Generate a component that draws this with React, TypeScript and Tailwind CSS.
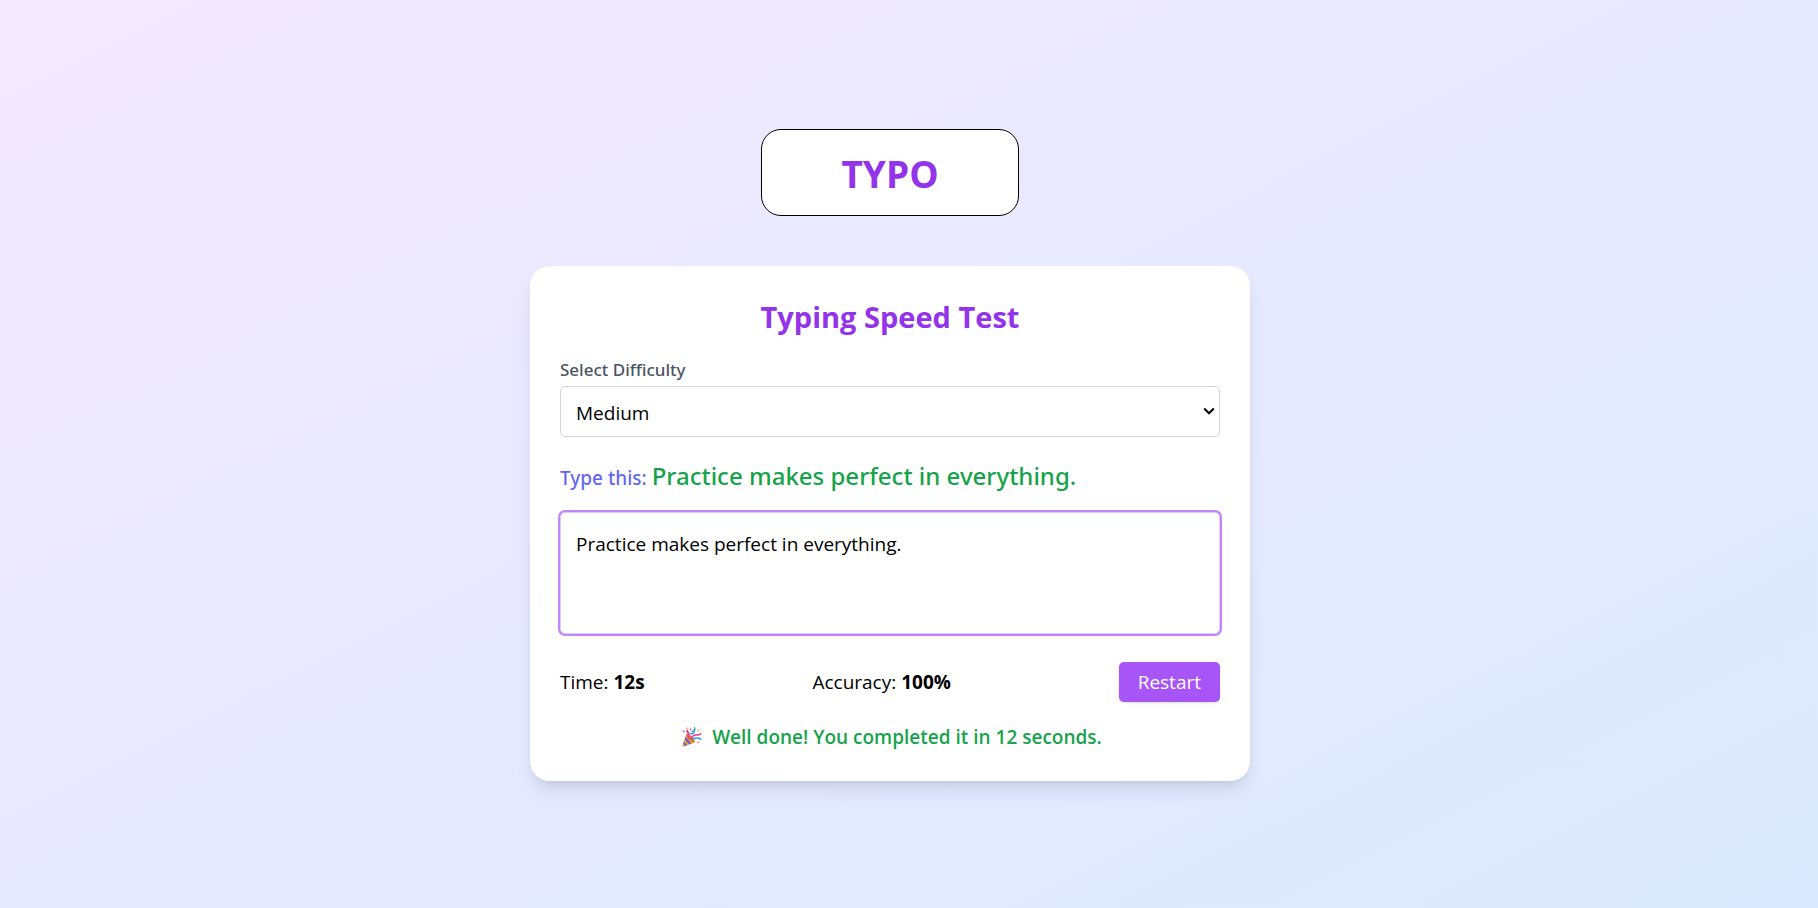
import { useState } from "react";

const PROMPTS: Record<string, string> = {
  Easy: "The sun is bright today.",
  Medium: "Practice makes perfect in everything.",
  Hard: "Consistency and discipline turn difficult skills into habits.",
};

function PartyPopper() {
  return (
    <svg viewBox="0 0 20 20" className="size-5" aria-hidden="true">
      <path d="M4.4 7.2 12.6 15.4 1.6 19.6Q.3 19.9.5 18.6Z" fill="#f2a03d" />
      <path d="M3.4 9.8 9.3 16.6 7.2 17.4 2.6 12.4Z" fill="#6a63c8" />
      <path d="M1.9 14.4 5.2 18.2 3.3 18.9 1.2 16.8Z" fill="#6a63c8" />
      <ellipse cx="8.5" cy="11.2" rx="2" ry="5.7" transform="rotate(-45 8.5 11.2)" fill="#d67d2e" />
      <path d="M5 3.6Q7.4 6.6 6.4 11" fill="none" stroke="#f92f92" strokeWidth="1.7" strokeLinecap="round" />
      <path d="M8.2 6.4Q11.5 7.8 12 5Q12 3.4 10.2 4.4M12 4.4Q13.4 2.6 12.4.8" fill="none" stroke="#2c9be8" strokeWidth="1.5" strokeLinecap="round" />
      <path d="M9 11.4Q11.4 7.6 14.4 8Q16.8 8.2 18.8 6.9" fill="none" stroke="#f92f92" strokeWidth="1.5" strokeLinecap="round" />
      <path d="M11 12Q14.6 9.8 18.8 12.2" fill="none" stroke="#2c9be8" strokeWidth="1.6" strokeLinecap="round" />
      <circle cx="5.4" cy="1.3" r="1" fill="#fcb75b" />
      <circle cx="1.7" cy="4.4" r=".9" fill="#f92f92" />
      <circle cx="16.2" cy="3.4" r="1" fill="#fcb75b" />
      <circle cx="16.2" cy="15.6" r="1" fill="#fc8f6b" />
      <circle cx="8.6" cy="2.4" r=".8" fill="#f92f92" />
    </svg>
  );
}

export default function App() {
  const [level, setLevel] = useState("Medium");
  const [typed, setTyped] = useState(PROMPTS.Medium);
  const target = PROMPTS[level];
  const hits = typed.split("").filter((c, i) => c === target[i]).length;
  const accuracy = typed.length ? Math.round((hits / typed.length) * 100) : 100;
  const seconds = 12;

  return (
    <main className="flex min-h-screen flex-col items-center justify-center gap-[50px] bg-linear-to-br/srgb from-[#f3e8ff] to-[#dbeafe] pt-[18px] pr-[54px] pb-4 pl-4 font-['Open_Sans','Noto_Sans',sans-serif] text-[19px] leading-[30px] text-black">
      <header className="rounded-[20px] border border-black bg-white px-[79px] pt-[21px] pb-[18px]">
        <h1 className="text-[37px] leading-[46px] font-bold text-[#9333ea]">TYPO</h1>
      </header>

      <section className="w-full max-w-[720px] rounded-[20px] bg-white px-[30px] pt-[31px] pb-[29px] shadow-[0_12px_19px_-4px_rgba(0,0,0,0.1),0_5px_8px_-5px_rgba(0,0,0,0.1)]">
        <h2 className="mb-5 text-center text-[29px] leading-10 font-bold text-[#9333ea]">Typing Speed Test</h2>

        <label htmlFor="difficulty" className="block font-['Noto_Sans',sans-serif] text-[17px] leading-[25px] font-medium text-[#4b5563]">
          Select Difficulty
        </label>
        <div className="relative mt-1">
          <select
            id="difficulty"
            value={level}
            onChange={(e) => {
              setLevel(e.target.value);
              setTyped("");
            }}
            className="block h-[51px] w-full appearance-none rounded-[5px] border border-[#d1d5db] bg-white px-[15px] pt-[2px]"
          >
            {Object.keys(PROMPTS).map((name) => (
              <option key={name}>{name}</option>
            ))}
          </select>
          <svg viewBox="0 0 12 8" className="pointer-events-none absolute top-[21px] right-[5px] h-2 w-3" aria-hidden="true">
            <path d="M1.2 1.5 6 6.3 10.8 1.5" fill="none" stroke="#000" strokeWidth="2" />
          </svg>
        </div>

        <p className="mt-[26px] mb-[19px] font-['Noto_Sans',sans-serif] leading-[30px] font-medium text-[#6366f1]">
          Type this: <span className="text-[24px] leading-none text-[#16a34a]">{target}</span>
        </p>

        <textarea
          aria-label="Your text"
          value={typed}
          onChange={(e) => setTyped(e.target.value)}
          className="block h-[122px] w-full resize-none rounded-[5px] border border-[#dccbf3] bg-white px-[15px] py-4 ring-[2px] ring-[#c084fc] outline-none"
        />

        <div className="mt-7 flex items-center justify-between">
          <p>
            Time: <strong className="font-bold">{seconds}s</strong>
          </p>
          <p>
            Accuracy: <strong className="font-bold">{accuracy}%</strong>
          </p>
          <button
            type="button"
            onClick={() => setTyped("")}
            className="rounded-[5px] bg-[#a855f7] px-[19px] py-[5px] text-white shadow-sm"
          >
            Restart
          </button>
        </div>

        <p className="mt-5 flex items-center justify-center gap-[10px] pl-1 font-semibold text-[#16a34a]">
          <PartyPopper />
          <span>Well done! You completed it in {seconds} seconds.</span>
        </p>
      </section>
    </main>
  );
}
